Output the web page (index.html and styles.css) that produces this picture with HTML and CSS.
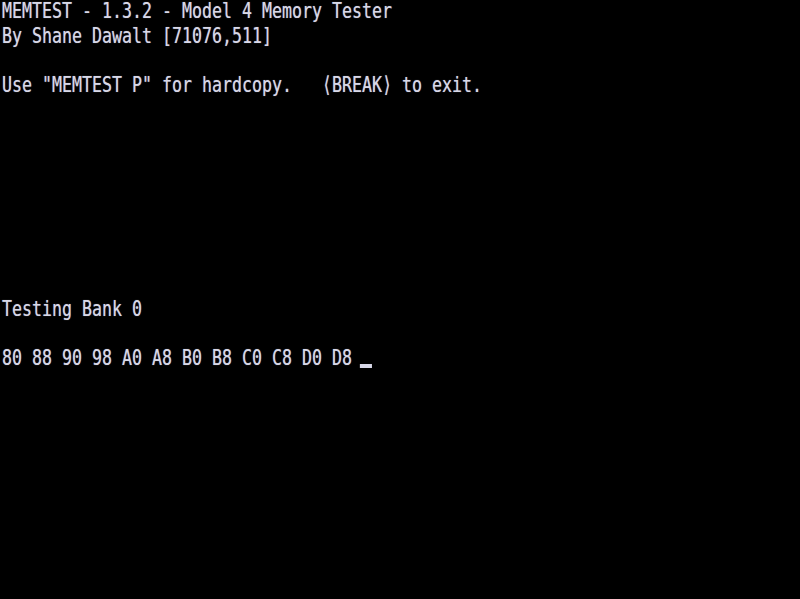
FILE: index.html
```html
<!DOCTYPE html>
<html>
<head>
<meta charset="utf-8">
<link rel="stylesheet" href="styles.css">
</head>
<body>
<div class="crt">
<pre class="screen">MEMTEST - 1.3.2 - Model 4 Memory Tester
By Shane Dawalt [71076,511]

Use "MEMTEST P" for hardcopy.   ⟨BREAK⟩ to exit.








Testing Bank 0

80 88 90 98 A0 A8 B0 B8 C0 C8 D0 D8 <span class="cursor"></span></pre>
</div>
</body>
</html>
```
FILE: styles.css
```css
html, body {
  margin: 0;
  padding: 0;
  background: #000;
  width: 800px;
  height: 599px;
  overflow: hidden;
}
.crt {
  width: 800px;
  height: 599px;
  background: #000;
  overflow: hidden;
}
.screen {
  margin: -1px 0 0 2px;
  width: 1055px;
  font-family: "DejaVu Sans Mono", monospace;
  font-size: 22px;
  line-height: 24.8px;
  color: #d8d8e8;
  white-space: pre;
  transform: scaleX(0.755);
  transform-origin: 0 0;
  text-shadow: 0 0 1px rgba(216, 216, 232, 0.6);
}
.cursor {
  display: inline-block;
  width: 16px;
  height: 4px;
  margin-left: -2.6px;
  vertical-align: -3px;
  background: #d8d8e8;
}
```
